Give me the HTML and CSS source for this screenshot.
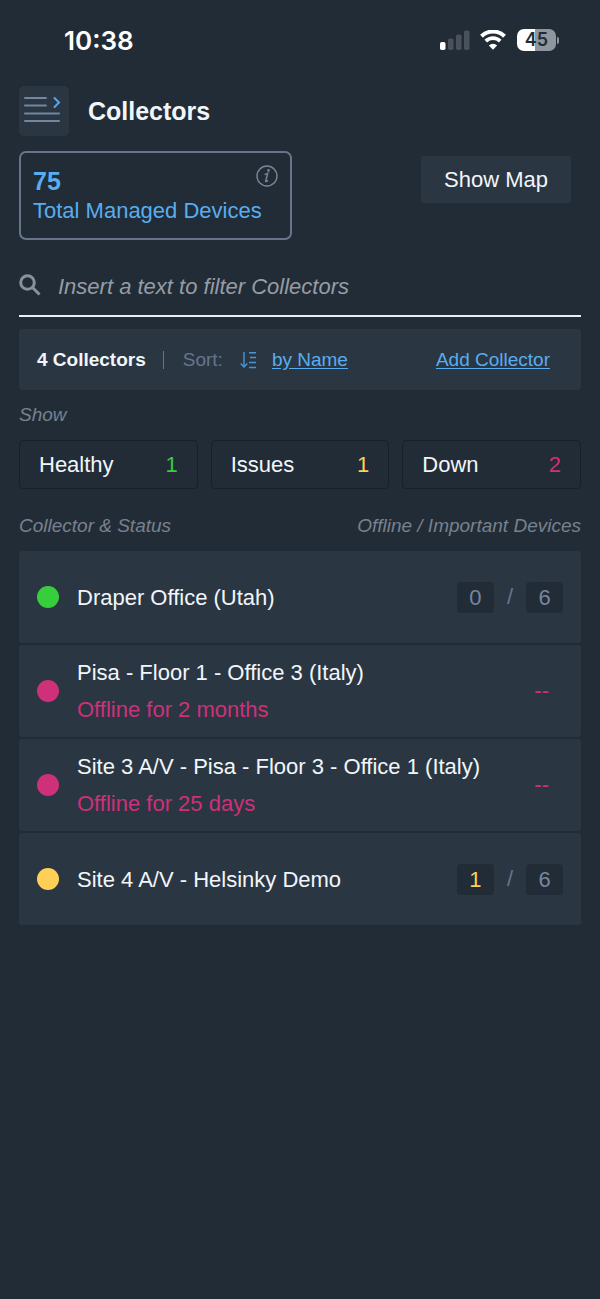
FILE: index.html
```html
<!DOCTYPE html>
<html lang="en">
<head>
    <meta charset="UTF-8">
    <meta name="viewport" content="width=device-width, initial-scale=1">
    <title>Collectors</title>
    <link rel="stylesheet" href="styles.css">
</head>
<body>
<div class="status-bar">
    <span class="time">10:38</span>
    <div class="status-icons">
        <svg class="signal" width="32" height="20" viewBox="0 0 32 20">
            <rect x="1" y="12" width="5.5" height="8" rx="1.8" fill="#fff"/>
            <rect x="9" y="8.5" width="5.5" height="11.5" rx="1.8" fill="#49515b"/>
            <rect x="17" y="4.5" width="5.5" height="15.500" rx="1.8" fill="#49515b"/>
            <rect x="25" y="0.5" width="5.5" height="19.500" rx="1.8" fill="#49515b"/>
        </svg>
        <svg class="wifi" width="26" height="20" viewBox="0 0 26 20">
            <path d="M1.5 6.200a16.400 16.400 0 0 1 23 0" fill="none" stroke="#fff" stroke-width="4"/>
            <path d="M5.800 11.100a10.200 10.200 0 0 1 14.400 0" fill="none" stroke="#fff" stroke-width="3.800"/>
            <path d="M13 19.800l-4.100-4.300a5.800 5.800 0 0 1 8.200 0z" fill="#fff"/>
        </svg>
        <div class="battery"><span class="battery-level">45</span></div>
    </div>
</div>

<div class="container">
    <div class="header">
        <button type="button" class="menu-button" aria-label="Menu">
            <svg width="50" height="50" viewBox="0 0 50 50" fill="none" stroke-width="2" stroke-linecap="round">
                <path d="M6 12h21M6 19.500h21M6 27.500h34M6 35h34" stroke="#7385a0"/>
                <path d="M35.500 12l4.500 4.500-4.500 4.500" stroke="#52a8ee"/>
            </svg>
        </button>
        <h1>Collectors</h1>
    </div>

    <div class="summary">
        <div class="total">
            <div class="total-top">
                <span class="total-number">75</span>
                <button type="button" class="info-button" aria-label="Info">
                    <svg width="22" height="22" viewBox="0 0 22 22" fill="none" stroke="#77859a">
                        <circle cx="11" cy="11" r="10" stroke-width="1.4"/>
                        <path d="M8.600 9.500c1.300-.2 2.200-.7 3.100-1.100l-2 7.400c-.2 1.100.9.900 2.400-.6" stroke-width="1.500"/>
                        <circle cx="12.500" cy="5.400" r="1.300" fill="#77859a" stroke="none"/>
                    </svg>
                </button>
            </div>
            <span class="total-label">Total Managed Devices</span>
        </div>
        <button type="button" class="map-button">Show Map</button>
    </div>

    <div class="search">
        <label for="filter" aria-label="Filter">
            <svg width="22" height="22" viewBox="0 0 22 22" fill="none" stroke="#88919d" stroke-width="3">
                <circle cx="8.500" cy="8.500" r="6.800"/>
                <path d="M13.500 13.500l7 7"/>
            </svg>
        </label>
        <input type="text" id="filter" placeholder="Insert a text to filter Collectors">
    </div>

    <div class="toolbar">
        <strong>4 Collectors</strong>
        <span class="divider"></span>
        <span class="sort-label">Sort:</span>
        <svg class="sort-icon" width="17" height="18" viewBox="0 0 17 18" fill="none" stroke="#4795d6" stroke-width="1.4">
            <path d="M4 1v15M.7 12.500L4 16l3.300-3.500M9 1.700h7M10 6.500h6M9 11.500h7M9 16.500h7"/>
        </svg>
        <a href="#">by Name</a>
        <a href="#" class="add-link">Add Collector</a>
    </div>

    <div class="caption">Show</div>
    <div class="filters">
        <button type="button">Healthy <span class="green">1</span></button>
        <button type="button">Issues <span class="yellow">1</span></button>
        <button type="button">Down <span class="pink">2</span></button>
    </div>

    <div class="caption list-caption">
        <span>Collector &amp; Status</span>
        <span>Offline / Important Devices</span>
    </div>
    <ul class="list">
        <li>
            <span class="dot dot-green"></span>
            <div class="info">Draper Office (Utah)</div>
            <div class="counts"><span class="count">0</span>/<span class="count">6</span></div>
        </li>
        <li>
            <span class="dot dot-pink"></span>
            <div class="info">Pisa - Floor 1 - Office 3 (Italy)<span class="pink">Offline for 2 months</span></div>
            <span class="no-data pink">--</span>
        </li>
        <li>
            <span class="dot dot-pink"></span>
            <div class="info">Site 3 A/V - Pisa - Floor 3 - Office 1 (Italy)<span class="pink">Offline for 25 days</span></div>
            <span class="no-data pink">--</span>
        </li>
        <li>
            <span class="dot dot-yellow"></span>
            <div class="info">Site 4 A/V - Helsinky Demo</div>
            <div class="counts"><span class="count yellow">1</span>/<span class="count">6</span></div>
        </li>
    </ul>
</div>
</body>
</html>
```

FILE: styles.css
```css
* {
    box-sizing: border-box;
}

body {
    margin: 0;
    background-color: #222c37;
    color: #f1f6fb;
    font-family: "Liberation Sans", Arial, sans-serif;
    font-size: 22px;
}

button, input {
    font-family: inherit;
    color: inherit;
}

button {
    cursor: pointer;
}

.status-bar {
    display: flex;
    justify-content: space-between;
    align-items: center;
    height: 80px;
    padding: 0 41px 0 64px;
    font-family: Inter, sans-serif;
    font-weight: 600;
}

.time {
    font-size: 26px;
    color: #fff;
}

.status-icons {
    display: flex;
    align-items: center;
}

.wifi {
    margin: 0 11px 0 9px;
}

.battery {
    display: flex;
    align-items: center;
}

.battery-level {
    width: 39px;
    height: 22px;
    border-radius: 7px;
    background: linear-gradient(to right, #fff 46%, #8f959c 46%);
    color: #222c37;
    font-size: 18px;
    line-height: 22px;
    text-align: center;
}

.battery::after {
    content: "";
    width: 2px;
    height: 7px;
    margin-left: 1px;
    border-radius: 0 2px 2px 0;
    background-color: #8f959c;
}

.container {
    padding: 6px 19px 0;
}

.header {
    display: flex;
    align-items: center;
    gap: 19px;
}

.header h1 {
    margin: 0;
    font-size: 25px;
}

.menu-button {
    display: flex;
    padding: 0;
    border: none;
    border-radius: 5px;
    background-color: #2b3643;
}

.summary {
    display: flex;
    justify-content: space-between;
    align-items: flex-start;
    margin-top: 15px;
    padding-right: 10px;
}

.total {
    width: 273px;
    height: 89px;
    padding: 12px;
    border: 2px solid #66758a;
    border-radius: 7px;
    color: #58adf0;
}

.total-top {
    display: flex;
    justify-content: space-between;
    height: 32px;
}

.total-number {
    font-size: 25px;
    font-weight: bold;
    line-height: 32px;
}

.total-label {
    line-height: 28px;
}

.info-button {
    display: flex;
    height: 22px;
    padding: 0;
    border: none;
    background: none;
}

.map-button {
    height: 47px;
    margin-top: 5px;
    padding: 0 23px;
    border: none;
    border-radius: 2px;
    background-color: #2b3643;
    font-size: 22px;
}

.search {
    display: flex;
    align-items: center;
    gap: 17px;
    height: 62px;
    margin-top: 15px;
    border-bottom: 2px solid #e8eef4;
}

.search label {
    display: flex;
}

.search input {
    flex: 1;
    min-width: 0;
    padding: 4px 0 0;
    border: none;
    outline: none;
    background: none;
    font-size: 22px;
}

.search input::placeholder {
    color: #959ca5;
    font-style: italic;
}

.toolbar {
    display: flex;
    align-items: center;
    height: 61px;
    margin-top: 12px;
    padding: 0 31px 0 18px;
    border-radius: 3px;
    background-color: #2b3643;
    font-size: 19px;
}

.toolbar a {
    color: #58adf0;
    text-underline-offset: 2px;
}

.divider {
    width: 1px;
    height: 18px;
    margin: 0 19px 0 17px;
    background-color: #66758a;
}

.sort-label {
    color: #66758a;
}

.sort-icon {
    margin: 0 15px 0 17px;
}

.toolbar .add-link {
    margin-left: auto;
}

.caption {
    margin-top: 12px;
    color: #78818e;
    font-size: 19px;
    font-style: italic;
    line-height: 26px;
}

.filters {
    display: grid;
    grid-template-columns: repeat(3, 1fr);
    gap: 13px;
    margin-top: 12px;
}

.filters button {
    display: flex;
    justify-content: space-between;
    align-items: center;
    height: 49px;
    padding: 0 19px;
    border: 1px solid #18202a;
    border-radius: 4px;
    background: none;
    font-size: 22px;
}

.list-caption {
    display: flex;
    justify-content: space-between;
    margin-top: 24px;
}

.list {
    display: flex;
    flex-direction: column;
    gap: 2px;
    margin: 12px 0 0;
    padding: 0;
    list-style: none;
}

.list li {
    display: flex;
    align-items: center;
    height: 92px;
    padding: 0 18px;
    border-radius: 3px;
    background-color: #2b3643;
}

.dot {
    width: 22px;
    height: 22px;
    margin-right: 18px;
    border-radius: 50%;
}

.info {
    flex: 1;
    line-height: 37px;
}

.info span {
    display: block;
}

.counts {
    display: flex;
    align-items: center;
    gap: 13px;
    color: #66758a;
}

.count {
    width: 37px;
    height: 31px;
    border-radius: 4px;
    background-color: #222c37;
    color: #78869f;
    line-height: 31px;
    text-align: center;
}

.no-data {
    margin-right: 14px;
}

.green {
    color: #36ce3c;
}

.yellow, .count.yellow {
    color: #ffcf57;
}

.pink {
    color: #ce3079;
}

.dot-green {
    background-color: #36ce3c;
}

.dot-yellow {
    background-color: #ffcf57;
}

.dot-pink {
    background-color: #ce3079;
}
```
